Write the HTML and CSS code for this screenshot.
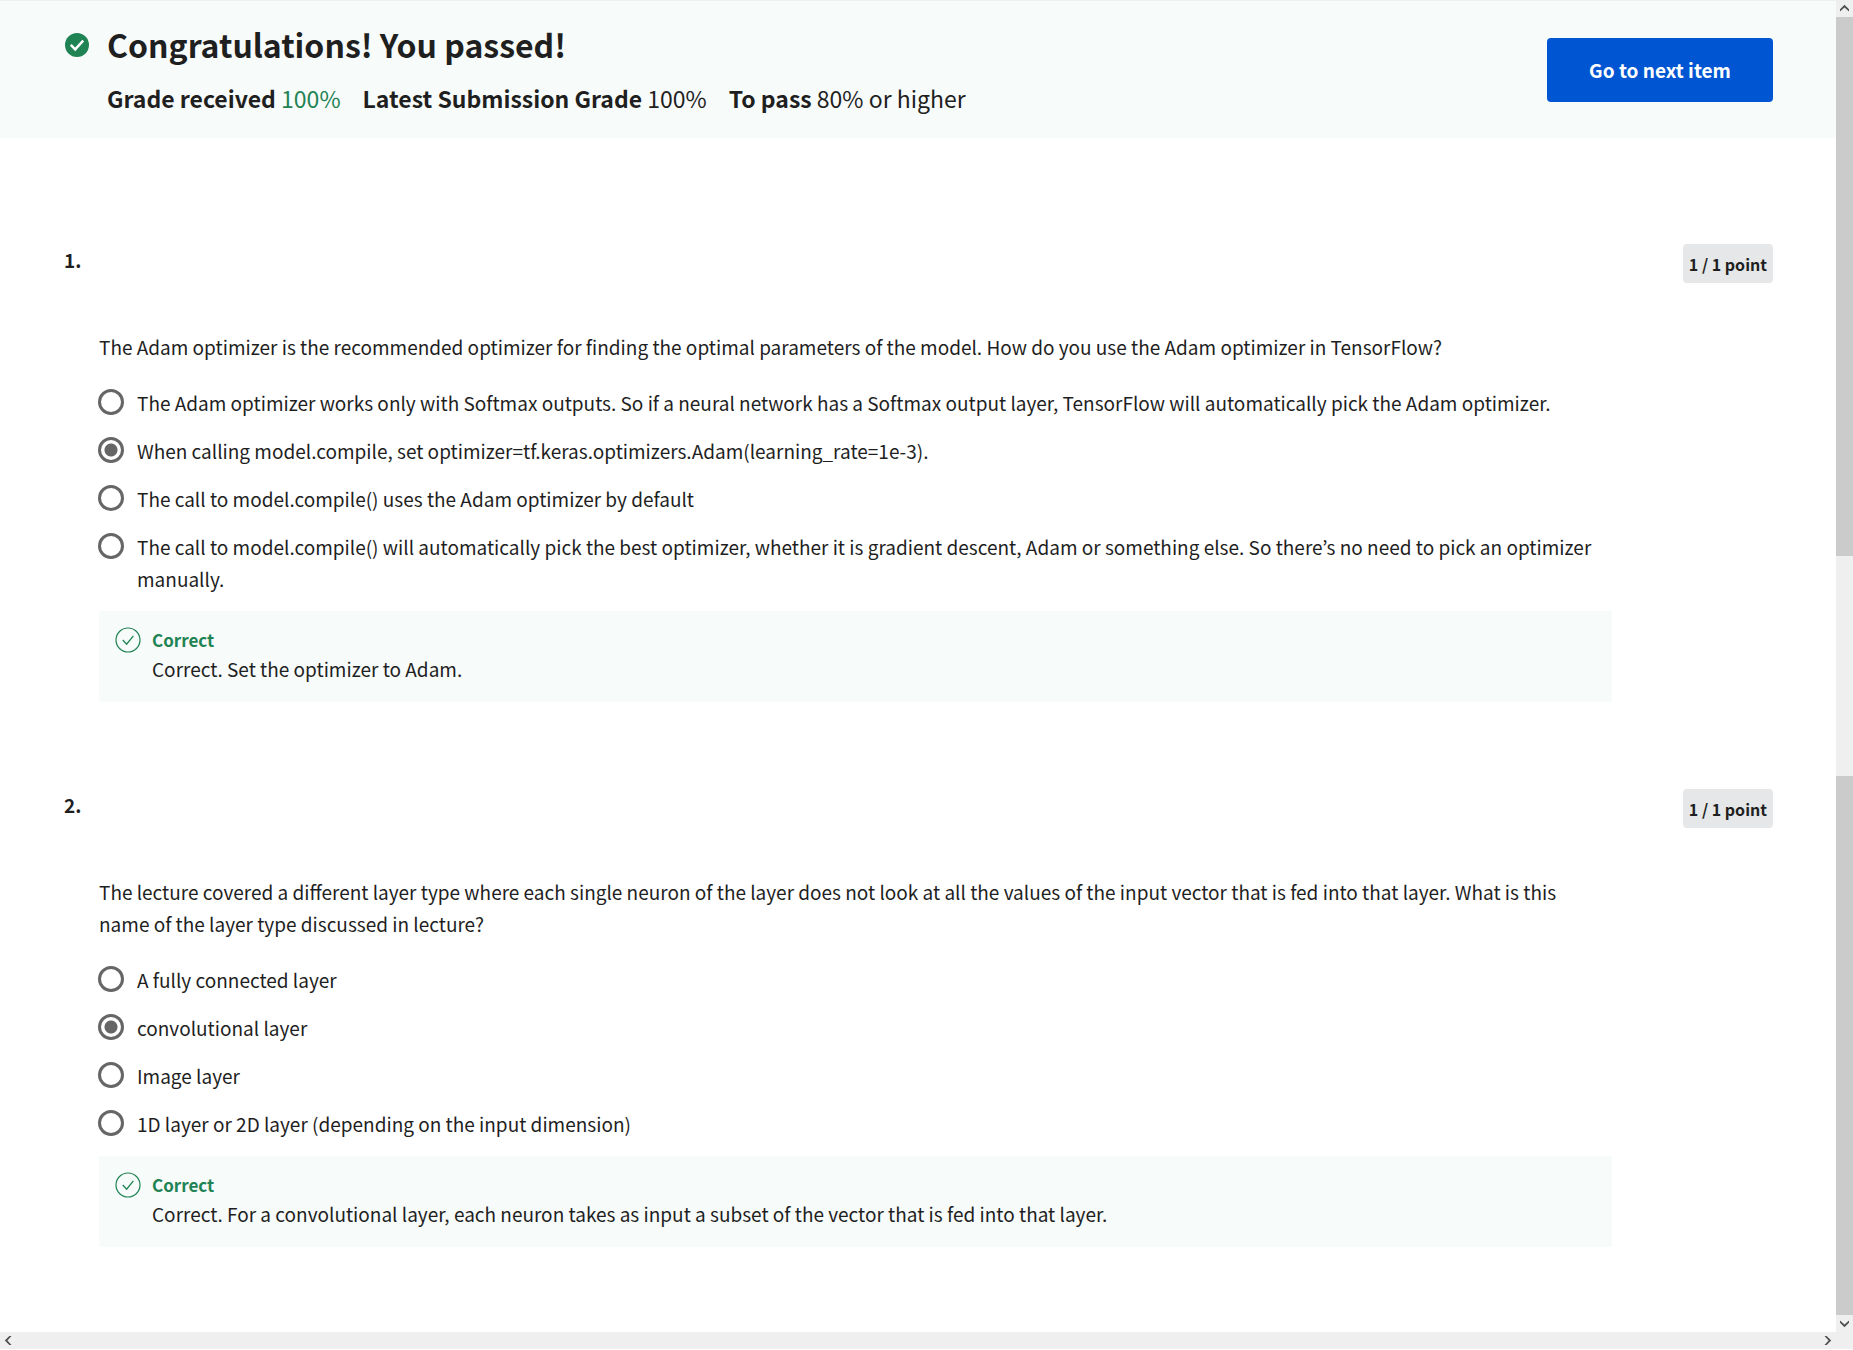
FILE: index.html
```html
<!DOCTYPE html>
<html lang="en">
<head>
<meta charset="utf-8">
<meta name="viewport" content="width=device-width, initial-scale=1">
<title>Quiz results</title>
<link rel="stylesheet" href="styles.css">
</head>
<body>
<svg width="0" height="0" class="symbols" aria-hidden="true">
  <symbol id="check-ring" viewBox="0 0 26 26">
    <circle cx="13" cy="13" r="12" fill="none" stroke="currentColor" stroke-width="1.2"/>
    <path d="M7.8 13l3.800 4.200 6.800-8.400" fill="none" stroke="currentColor" stroke-width="1.3"/>
  </symbol>
  <symbol id="chevron" viewBox="0 0 17 17">
    <path d="M4 11.500V9.300L8.500 4.800 13 9.300V11.500L8.500 7.400z" fill="#505050"/>
  </symbol>
</svg>
<div class="shell">
  <div class="page">
    <header class="banner">
      <svg class="banner-icon" viewBox="0 0 24 24" aria-hidden="true">
        <circle cx="12" cy="12" r="12" fill="#1f8354"/>
        <path d="M5.800 11.800l4.400 4.600 8-8.800" fill="none" stroke="#fff" stroke-width="2.400"/>
      </svg>
      <div class="banner-text">
        <h1>Congratulations! You passed!</h1>
        <p class="grades">
          <span><strong>Grade received</strong> <span class="passed">100%</span></span>
          <span><strong>Latest Submission Grade</strong> 100%</span>
          <span><strong>To pass</strong> 80% or higher</span>
        </p>
      </div>
      <button type="button" class="next">Go to next item</button>
    </header>
    <main class="questions">
      <section class="question">
        <h2 class="number">1.</h2>
        <div class="points">1 / 1 point</div>
        <div class="body" role="radiogroup" aria-labelledby="q1">
          <p class="prompt" id="q1">The Adam optimizer is the recommended optimizer for finding the optimal parameters of the model. How do you use the Adam optimizer in TensorFlow?</p>
          <div class="options">
            <label class="option"><input type="radio" name="q1"><span>The Adam optimizer works only with Softmax outputs. So if a neural network has a Softmax output layer, TensorFlow will automatically pick the Adam optimizer.</span></label>
            <label class="option"><input type="radio" name="q1" checked><span>When calling model.compile, set optimizer=tf.keras.optimizers.Adam(learning_rate=1e-3).</span></label>
            <label class="option"><input type="radio" name="q1"><span>The call to model.compile() uses the Adam optimizer by default</span></label>
            <label class="option"><input type="radio" name="q1"><span>The call to model.compile() will automatically pick the best optimizer, whether it is gradient descent, Adam or something else. So there’s no need to pick an optimizer manually.</span></label>
          </div>
          <div class="feedback">
            <svg class="feedback-icon" aria-hidden="true"><use href="#check-ring"/></svg>
            <div>
              <h3>Correct</h3>
              <p>Correct. Set the optimizer to Adam.</p>
            </div>
          </div>
        </div>
      </section>
      <section class="question">
        <h2 class="number">2.</h2>
        <div class="points">1 / 1 point</div>
        <div class="body" role="radiogroup" aria-labelledby="q2">
          <p class="prompt" id="q2">The lecture covered a different layer type where each single neuron of the layer does not look at all the values of the input vector that is fed into that layer. What is this name of the layer type discussed in lecture?</p>
          <div class="options">
            <label class="option"><input type="radio" name="q2"><span>A fully connected layer</span></label>
            <label class="option"><input type="radio" name="q2" checked><span>convolutional layer</span></label>
            <label class="option"><input type="radio" name="q2"><span>Image layer</span></label>
            <label class="option"><input type="radio" name="q2"><span>1D layer or 2D layer (depending on the input dimension)</span></label>
          </div>
          <div class="feedback">
            <svg class="feedback-icon" aria-hidden="true"><use href="#check-ring"/></svg>
            <div>
              <h3>Correct</h3>
              <p>Correct. For a convolutional layer, each neuron takes as input a subset of the vector that is fed into that layer.</p>
            </div>
          </div>
        </div>
      </section>
    </main>
  </div>
  <div class="bar bar-vertical" aria-hidden="true">
    <svg class="arrow"><use href="#chevron"/></svg>
    <div class="thumb"></div>
    <div class="track"></div>
    <div class="thumb"></div>
    <svg class="arrow down"><use href="#chevron"/></svg>
  </div>
  <div class="bar bar-horizontal" aria-hidden="true">
    <svg class="arrow left"><use href="#chevron"/></svg>
    <svg class="arrow right"><use href="#chevron"/></svg>
  </div>
</div>
</body>
</html>
```
FILE: styles.css
```css
* {
  box-sizing: border-box;
}

body {
  margin: 0;
  background: #fff;
  color: #1f1f1f;
  font-family: "Noto Sans CJK KR", "Noto Sans", sans-serif;
  font-size: 19px;
  line-height: 32px;
}

h1, h2, h3, p {
  margin: 0;
}

.symbols {
  position: absolute;
}

.shell {
  display: grid;
  grid-template-columns: minmax(0, 1fr) 17px;
  grid-template-rows: 1fr 17px;
  min-height: 100vh;
  padding-bottom: 1px;
}

/* Result banner */
.banner {
  display: flex;
  align-items: center;
  padding: 15px 63px 14px 64px;
  border-top: 1px solid #efefef;
  background: #f7fbfa;
}

.banner-icon {
  flex: none;
  align-self: flex-start;
  width: 24px;
  height: 24px;
  margin: 17px 18px 0 1px;
}

.banner-text {
  flex: 1;
}

h1 {
  font-size: 32px;
  font-weight: 700;
  line-height: 56px;
}

.grades {
  display: flex;
  flex-wrap: wrap;
  column-gap: 22px;
  font-size: 23px;
  line-height: 52px;
}

.grades strong {
  font-weight: 700;
}

.passed {
  color: #1f8354;
}

.next {
  width: 226px;
  height: 64px;
  border: 0;
  border-radius: 4px;
  background: #0056d2;
  color: #fff;
  font: inherit;
  font-weight: 700;
}

/* Questions */
.questions {
  display: grid;
  gap: 87px;
  padding: 106px 63px 85px 64px;
}

.question {
  display: grid;
  grid-template-columns: 35px minmax(0, 1fr) 161px;
  row-gap: 48px;
}

.number {
  font-size: 19px;
  font-weight: 700;
  line-height: 32px;
}

.points {
  grid-column: 3;
  justify-self: end;
  padding: 4px 6px 3px;
  border-radius: 4px;
  background: #e5e7e8;
  font-size: 16px;
  font-weight: 700;
}

.body {
  grid-column: 2;
}

.prompt {
  padding-right: 12px;
}

.options {
  display: grid;
  gap: 16px;
  margin: 24px 0 16px -1px;
}

.option {
  display: flex;
  gap: 13px;
  padding-right: 12px;
}

.option input {
  flex: none;
  appearance: none;
  width: 26px;
  height: 26px;
  margin: 2px 0 0;
  border: 3px solid #666;
  border-radius: 50%;
}

.option input:checked {
  background: radial-gradient(circle, #666 6px, transparent 7px);
}

.feedback {
  display: flex;
  gap: 11px;
  padding: 16px 16px 17px;
  background: #f7fbfa;
}

.feedback-icon {
  flex: none;
  width: 26px;
  height: 26px;
  color: #1f8354;
}

.feedback h3 {
  color: #1f8354;
  font-size: 17px;
  font-weight: 700;
  line-height: 26px;
}

/* Scroll bars */
.bar {
  display: flex;
  background: #efefef;
}

.bar-vertical {
  flex-direction: column;
}

.bar-horizontal {
  grid-column: 1 / -1;
  justify-content: space-between;
  padding-right: 17px;
}

.arrow {
  flex: none;
  width: 17px;
  height: 17px;
}

.down {
  transform: rotate(180deg);
}

.left {
  transform: rotate(-90deg);
}

.right {
  transform: rotate(90deg);
}

.thumb {
  flex: 539;
  background: #cbcbcb;
}

.track {
  flex: 220;
}
```
